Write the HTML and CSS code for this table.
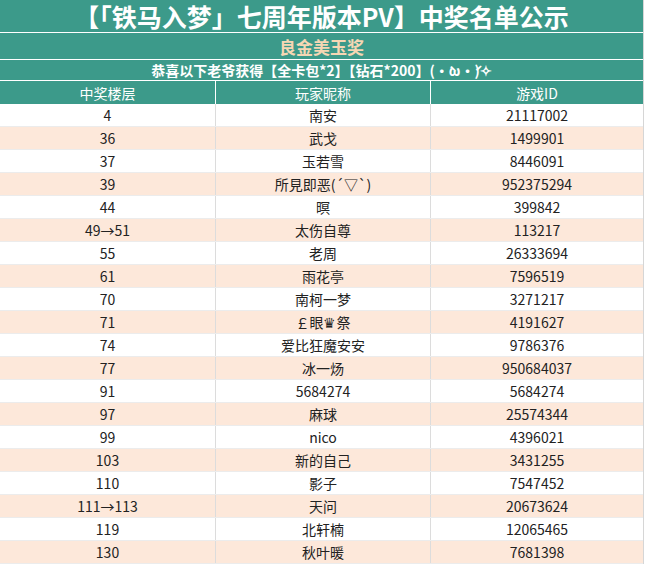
FILE: index.html
```html
<!DOCTYPE html>
<html lang="zh">
<head>
<meta charset="utf-8">
<link rel="stylesheet" href="styles.css">
</head>
<body>
<div class="sheet">
  <div class="title">【「铁马入梦」七周年版本PV】中奖名单公示</div>
  <div class="award">良金美玉奖</div>
  <div class="prize">恭喜以下老爷获得【全卡包*2】【钻石*200】(•̀ω•́)✧</div>
  <div class="row head"><div>中奖楼层</div><div>玩家昵称</div><div>游戏ID</div></div>
  <div class="row"><div>4</div><div>南安</div><div>21117002</div></div>
  <div class="row alt"><div>36</div><div>武戈</div><div>1499901</div></div>
  <div class="row"><div>37</div><div>玉若雪</div><div>8446091</div></div>
  <div class="row alt"><div>39</div><div>所見即恶(´▽`)</div><div>952375294</div></div>
  <div class="row"><div>44</div><div>暝</div><div>399842</div></div>
  <div class="row alt"><div>49→51</div><div>太伤自尊</div><div>113217</div></div>
  <div class="row"><div>55</div><div>老周</div><div>26333694</div></div>
  <div class="row alt"><div>61</div><div>雨花亭</div><div>7596519</div></div>
  <div class="row"><div>70</div><div>南柯一梦</div><div>3271217</div></div>
  <div class="row alt"><div>71</div><div>￡眼♛祭</div><div>4191627</div></div>
  <div class="row"><div>74</div><div>爱比狂魔安安</div><div>9786376</div></div>
  <div class="row alt"><div>77</div><div>冰一炀</div><div>950684037</div></div>
  <div class="row"><div>91</div><div>5684274</div><div>5684274</div></div>
  <div class="row alt"><div>97</div><div>麻球</div><div>25574344</div></div>
  <div class="row"><div>99</div><div>nico</div><div>4396021</div></div>
  <div class="row alt"><div>103</div><div>新的自己</div><div>3431255</div></div>
  <div class="row"><div>110</div><div>影子</div><div>7547452</div></div>
  <div class="row alt"><div>111→113</div><div>天问</div><div>20673624</div></div>
  <div class="row"><div>119</div><div>北轩楠</div><div>12065465</div></div>
  <div class="row alt"><div>130</div><div>秋叶暖</div><div>7681398</div></div>
</div>
</body>
</html>
```

FILE: styles.css
```css
html, body {
  margin: 0;
  padding: 0;
  background: #ffffff;
}
body {
  font-family: "Noto Sans CJK SC", "Noto Sans", sans-serif;
  color: #222;
}
.sheet {
  width: 643px;
  border-right: 1px solid #d6d6d6;
}
.band {
  background: #3c9a8a;
}
.title,
.award,
.prize {
  background: #3c9a8a;
  display: flex;
  align-items: center;
  justify-content: center;
  font-weight: 700;
  border-bottom: 1px solid #ffffff;
  white-space: nowrap;
}
.title {
  color: #ffffff;
  font-size: 25px;
  line-height: 1;
  height: 32px;
}
.award {
  color: #f6d7b4;
  font-size: 17px;
  height: 26px;
}
.prize {
  color: #ffffff;
  font-size: 14px;
  height: 20px;
}
.row {
  display: grid;
  grid-template-columns: 215px 215px 1fr;
  height: 23px;
  box-sizing: border-box;
  border-bottom: 1px solid #ececec;
  font-size: 14px;
}
.row > div {
  display: flex;
  align-items: center;
  justify-content: center;
  white-space: nowrap;
}
.row > div + div {
  border-left: 1px solid #dcdcdc;
}
.row.head {
  background: #3c9a8a;
  color: #ffffff;
  height: 23px;
  border-bottom: none;
}
.row.head > div + div {
  border-left: 1px solid #ffffff;
}
.row.alt {
  background: #fde8da;
}
```
